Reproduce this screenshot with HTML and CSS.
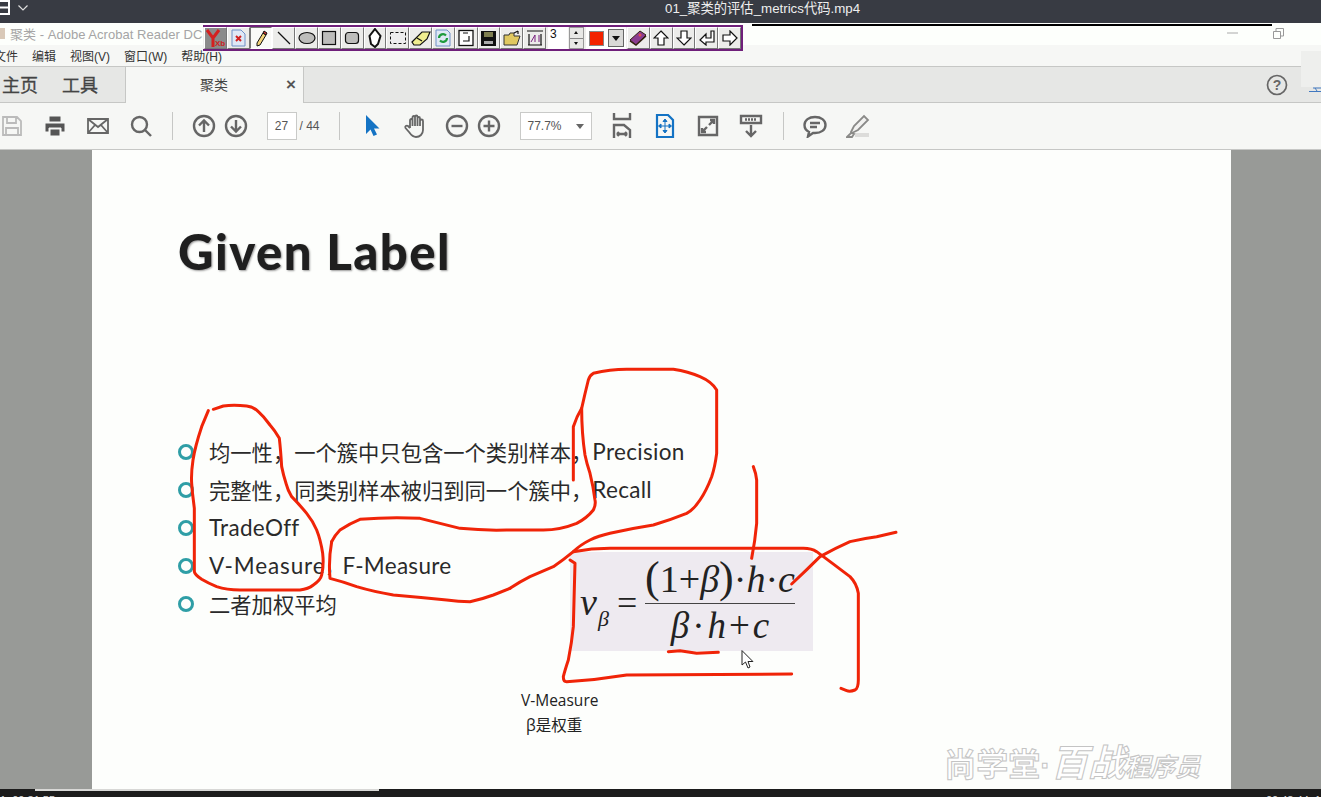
FILE: index.html
```html
<!DOCTYPE html>
<html lang="zh">
<head>
<meta charset="utf-8">
<title>聚类</title>
<link rel="stylesheet" href="styles.css">
</head>
<body>
<div class="app">
  <header class="player-bar">
    <svg class="player-logo" width="12" height="16" viewBox="0 0 12 16"><path d="M-2 1H9V14H-2M-2 7.500H9"/></svg>
    <svg class="player-chev" width="12" height="8" viewBox="0 0 12 8"><path d="M1.500 1.500L6 6L10.500 1.500"/></svg>
    <span class="player-title">01_聚类的评估_metrics代码.mp4</span>
  </header>

  <div class="titlebar">
    <span class="doc-mini"></span>
    <span class="app-title">聚类 - Adobe Acrobat Reader DC</span>
    <svg class="win-min" width="11" height="2" viewBox="0 0 11 2"><path d="M0 1H11"/></svg>
    <svg class="win-restore" width="11" height="11" viewBox="0 0 11 11"><path d="M.5 3.500H7.500V10.500H.5ZM3 3.500V.5H10.500V8H7.500"/></svg>
  </div>

  <nav class="menubar">
    <span>文件</span><span>编辑</span><span>视图(V)</span><span>窗口(W)</span><span>帮助(H)</span>
  </nav>

  <div class="tabbar">
    <span class="tab-link tab-home">主页</span>
    <span class="tab-link tab-tools">工具</span>
    <div class="tab-active"><span>聚类</span><b>×</b></div>
    <svg class="help" width="22" height="22" viewBox="0 0 22 22"><circle cx="11" cy="11" r="9.500"/><text x="11" y="16" text-anchor="middle">?</text></svg>
  </div>

  <div class="toolbar">
    <div class="tb-group g-file">
      <span class="tb"><svg width="22" height="24" viewBox="0 0 22 24" class="ic ic-off"><path d="M2 3H16L20 7V21H2ZM6 3V9H15V3M5 21V14H17V21"/></svg></span>
      <span class="tb"><svg width="24" height="24" viewBox="0 0 24 24" class="ic ic-solid"><path d="M6 2H18V8H6ZM2 9H22V18H18V14H6V18H2ZM7 15H17V22H7Z"/></svg></span>
      <span class="tb"><svg width="24" height="24" viewBox="0 0 24 24" class="ic"><path d="M2 5H22V19H2ZM2 5L12 13L22 5M2 19L9 11M22 19L15 11"/></svg></span>
      <span class="tb"><svg width="24" height="24" viewBox="0 0 24 24" class="ic ic-bold"><circle cx="10.500" cy="10.500" r="7.500"/><path d="M16 16L22 22"/></svg></span>
    </div>
    <i class="sep s1"></i>
    <div class="tb-group g-nav">
      <span class="tb tb-s"><svg width="24" height="24" viewBox="0 0 24 24" class="ic ic-bold"><circle cx="12" cy="12" r="10"/><path d="M12 18V7M7 11.500L12 6.500L17 11.500"/></svg></span>
      <span class="tb tb-s"><svg width="24" height="24" viewBox="0 0 24 24" class="ic ic-bold"><circle cx="12" cy="12" r="10"/><path d="M12 6V17M7 12.500L12 17.500L17 12.500"/></svg></span>
    </div>
    <span class="field page-field">27</span>
    <span class="page-total">/ 44</span>
    <i class="sep s2"></i>
    <div class="tb-group g-select">
      <span class="tb"><svg width="24" height="24" viewBox="0 0 24 24" class="ic-blue"><path d="M6 1V20L10.500 15.500L13.500 22L17 20.500L14 14.500H19.500Z"/></svg></span>
      <span class="tb"><svg width="24" height="24" viewBox="0 0 24 24" class="ic"><path d="M7 14V6.500C7 4.500 9.500 4.500 9.500 6.500V12M9.500 12V3.500C9.500 1.500 12 1.500 12 3.500V12M12 12V3C12 1 14.500 1 14.500 3V12M14.500 12V4.500C14.500 2.500 17 2.500 17 4.500V12M17 12V7C17 5 20 5 20 7V16C20 20 17 23 13 23C9 23 7.500 20 6 18L2.500 14C1.500 12.500 3.500 11 5 12L7 14"/></svg></span>
    </div>
    <div class="tb-group g-zoom">
      <span class="tb tb-s"><svg width="24" height="24" viewBox="0 0 24 24" class="ic ic-bold"><circle cx="12" cy="12" r="10"/><path d="M6.500 12H17.500"/></svg></span>
      <span class="tb tb-s"><svg width="24" height="24" viewBox="0 0 24 24" class="ic ic-bold"><circle cx="12" cy="12" r="10"/><path d="M6.500 12H17.500M12 6.500V17.500"/></svg></span>
    </div>
    <span class="field zoom-field">77.7%<i class="caret"></i></span>
    <div class="tb-group g-view">
      <span class="tb"><svg width="20" height="26" viewBox="0 0 20 26" class="ic ic-bold"><path d="M2 0V6H18V0M2 25V12H12L18 17V25M5 21H15M5 21L7 19M5 21L7 23M15 21L13 19M15 21L13 23"/></svg></span>
      <span class="tb"><svg width="20" height="24" viewBox="0 0 20 24" class="ic-blue-line"><path d="M2 1H13L18 6V23H2Z"/><path class="thin" d="M10 6V18M4 12H16M10 5L8 7.500H12ZM10 19L8 16.500H12ZM3.500 12L6 10V14ZM16.500 12L14 10V14Z"/></svg></span>
      <span class="tb"><svg width="22" height="22" viewBox="0 0 22 22" class="ic ic-bold"><path d="M2 2H20V20H2Z"/><path d="M12 10L17 5M13 5H17V9M10 12L5 17M5 13V17H9"/></svg></span>
      <span class="tb"><svg width="24" height="24" viewBox="0 0 24 24" class="ic ic-bold"><path d="M2 2H22V9H2ZM12 11V22M7 17L12 22L17 17"/><path class="dots" d="M6 5.500H18"/></svg></span>
    </div>
    <i class="sep s3"></i>
    <div class="tb-group g-review">
      <span class="tb"><svg width="24" height="24" viewBox="0 0 24 24" class="ic ic-bold"><path d="M12 3C18 3 22.500 6 22.500 11C22.500 16 18 19 12 19H10L5 22.500L6 18C3 16.500 1.500 14 1.500 11C1.500 6 6 3 12 3ZM7 9H17M7 13H14"/></svg></span>
      <span class="tb"><svg width="24" height="24" viewBox="0 0 24 24" class="ic-light"><path class="hl-base" d="M9 19H23V23H9Z"/><path d="M5 18L8 12L18 2L22 6L12 16L6 19Z"/><path d="M1 23L5 19L8 20L6 23Z"/></svg></span>
    </div>
  </div>

  <main class="viewer">
    <article class="page">
      <h1 class="slide-title">Given Label</h1>
      <ul class="bullets">
        <li>均一性，一个簇中只包含一个类别样本，<span class="lat">Precision</span></li>
        <li>完整性，同类别样本被归到同一个簇中，<span class="lat">Recall</span></li>
        <li><span class="lat">TradeOff</span></li>
        <li><span class="lat lat-v">V-Measure</span><span class="comma">，</span><span class="lat">F-Measure</span></li>
        <li>二者加权平均</li>
      </ul>
      <figure class="figure">
        <div class="formula">
          <span class="f-v">v<sub>β</sub></span>
          <span class="f-eq">=</span>
          <span class="f-frac">
            <span class="f-num"><span class="up-p">(</span><span class="up-t">1+</span>β<span class="up-p">)</span><span class="up-t">·</span>h<span class="up-t">·</span>c</span>
            <span class="f-den">β<span class="up-t sp">·</span>h<span class="up-t sp">+</span>c</span>
          </span>
        </div>
        <figcaption class="caption">
          <span>V-Measure</span>
          <span class="cap-2">β是权重</span>
        </figcaption>
      </figure>
      <div class="watermark">尚学堂<span class="wm-dot">·</span><em>百战</em><em class="wm-small">程序员</em></div>
    </article>
  </main>

  <footer class="player-foot">
    <i class="progress"></i>
    <span class="time">1: 00:31:55</span>
    <span class="time">00:48:44 :1</span>
  </footer>

  <!-- floating annotation palette -->
  <div class="palette">
    <span class="pb pb-logo"><svg width="20" height="20" viewBox="0 0 20 20"><path class="y" d="M2 2L8 10V19M14 2L8 10"/><text x="10" y="18">Xb</text></svg></span>
    <span class="pb"><svg width="18" height="18" viewBox="0 0 18 18"><path class="doc" d="M3 1H12L16 5V17H3Z"/><path class="docx" d="M7 7L12 12M12 7L7 12"/></svg></span>
    <span class="pb pb-on"><svg width="16" height="18" viewBox="0 0 16 18"><path class="pen" d="M4 14L10 4L13 6L7 16L4 17Z"/><path class="pen-tip" d="M10 4L11 2L14 4L13 6Z"/></svg></span>
    <span class="pb"><svg width="16" height="16" viewBox="0 0 16 16"><path class="ln" d="M2 2L14 14"/></svg></span>
    <span class="pb"><svg width="18" height="14" viewBox="0 0 18 14"><ellipse class="sh" cx="9" cy="7" rx="8" ry="5.500"/></svg></span>
    <span class="pb"><svg width="16" height="16" viewBox="0 0 16 16"><rect class="sh" x="1.500" y="1.500" width="13" height="13"/></svg></span>
    <span class="pb"><svg width="16" height="16" viewBox="0 0 16 16"><rect class="sh" x="1.500" y="2.500" width="13" height="11" rx="3"/></svg></span>
    <span class="pb"><svg width="14" height="20" viewBox="0 0 14 20"><path class="ln-w ln-thick" d="M7 1L12.500 8L10 16L7 19L3 16L1.500 8Z"/></svg></span>
    <span class="pb"><svg width="18" height="14" viewBox="0 0 18 14"><rect class="dash" x="1.500" y="1.500" width="15" height="11"/></svg></span>
    <span class="pb"><svg width="20" height="16" viewBox="0 0 20 16"><path class="eraser" d="M1 12L11 2H19L16 9L9 15H3Z"/><path class="ln" d="M6 8L11 11"/></svg></span>
    <span class="pb"><svg width="16" height="18" viewBox="0 0 16 18"><path class="doc" d="M1 1H12L15 4V17H1Z"/><path class="grn" d="M4 9A4 4 0 0 1 11 6.500M12 9A4 4 0 0 1 5 11.500"/></svg></span>
    <span class="pb"><svg width="16" height="18" viewBox="0 0 16 18"><rect class="ln-box" x="1" y="1.500" width="14" height="15"/><path class="ln" d="M5 4H10M5 12H11V7"/></svg></span>
    <span class="pb"><svg width="15" height="15" viewBox="0 0 15 15"><path class="disk" d="M0 0H15V15H0Z"/><path class="disk-l" d="M3 1H12V6H3Z"/><path class="disk-s" d="M3 10H12V13H3Z"/></svg></span>
    <span class="pb"><svg width="18" height="16" viewBox="0 0 18 16"><path class="folder" d="M1 15V5H6L7 3H11V6H17L14 15Z"/><path class="ln" d="M11 3L15 1M15 1V4"/></svg></span>
    <span class="pb"><svg width="16" height="16" viewBox="0 0 16 16"><path class="ln" d="M0 1H16M1 15H15M2 15V4M14 15V4"/><path class="pur" d="M4 12L8 5M8 5V12M12 5V12"/></svg></span>
    <span class="pf-num">3</span>
    <span class="pf-spin"><i class="up"></i><i class="down"></i></span>
    <span class="pf-color"><i class="swatch"></i><i class="drop"></i></span>
    <span class="pb"><svg width="18" height="16" viewBox="0 0 18 16"><path class="book" d="M1 10L11 1L17 5L7 15Z"/><path class="book-l" d="M1 11L7 15L17 6"/><circle class="book-d" cx="11" cy="5" r="1.500"/></svg></span>
    <span class="pb"><svg width="16" height="16" viewBox="0 0 16 16"><path class="ln-w" d="M8 1L15 8H11V15H5V8H1Z"/></svg></span>
    <span class="pb"><svg width="16" height="16" viewBox="0 0 16 16"><path class="ln-w" d="M8 15L15 8H11V1H5V8H1Z"/></svg></span>
    <span class="pb"><svg width="16" height="16" viewBox="0 0 16 16"><path class="ln-w" d="M1 10L7 4V8H12V1H15V12H7V15Z"/></svg></span>
    <span class="pb"><svg width="16" height="16" viewBox="0 0 16 16"><path class="ln-w" d="M15 8L8 1V5H1V11H8V15Z"/></svg></span>
  </div>
  <i class="black-line"></i>
  <div class="corner-patch"></div>
  <svg class="corner-frag" width="12" height="5" viewBox="0 0 12 5"><path d="M0 4.500H12M4 1H12M6 1L8 4"/></svg>

  <!-- red pen annotations drawn over the document -->
  <svg class="ink" width="1321" height="797" viewBox="0 0 1321 797">
    <g transform="translate(160 360) scale(.33333)">
      <path d="M145 152L125 200Q105 260 99 300Q93 340 95 370Q97 400 100 420L103 445L103 635Q105 645 125 658Q145 670 170 680Q200 690 240 690L420 690Q445 687 460 675Q482 660 485 645Q492 615 488 580Q482 540 470 510Q458 482 440 460Q415 430 395 410Q383 390 378 370Q370 345 365 320Q362 270 358 235Q345 212 330 195Q312 170 295 155Q280 140 260 138Q220 134 190 138L160 148"/>
      <path d="M1050 685Q1025 695 1000 705Q965 718 930 725Q895 725 860 720Q780 712 700 705Q640 695 590 680Q550 665 510 655Q505 600 515 545"/>
    </g>
    <g transform="translate(510 360) scale(.33333)">
      <path d="M-535 545Q-525 525 -510 510Q-480 490 -450 478Q-360 470 -270 475Q-210 490 -150 505Q-80 512 -10 510L100 510Q150 510 200 490Q230 475 250 450Q258 435 255 420Q250 380 240 340Q230 310 225 285Q215 220 215 145Q225 100 235 60Q240 45 250 40Q300 28 350 28L490 28Q535 35 570 50Q605 65 620 90L620 280Q615 320 605 350Q590 390 570 420Q550 450 530 460Q480 480 430 495Q365 505 300 520Q265 528 240 540Q210 555 190 575Q160 600 130 620Q95 635 60 650Q30 665 0 685"/>
      <path d="M190 360L190 200Q200 170 215 145"/>
      <path d="M180 600L195 610L190 800Q185 850 175 900Q165 930 160 950Q160 965 170 965Q260 960 350 945L845 942"/>
      <path d="M190 575Q245 565 300 565L880 565Q905 565 920 575Q970 612 1020 650Q1040 670 1045 700L1045 960Q1045 985 1035 990Q1020 996 1010 992L993 985"/>
      <path d="M730 320Q738 340 740 360L740 490Q735 545 725 595"/>
      <path d="M845 672Q890 630 930 590Q975 565 1020 545Q1060 535 1100 530L1158 517"/>
      <path d="M475 875L510 872L560 880L625 877"/>
    </g>
    <path class="cursor" d="M742 651V665L745.500 662L748 668L750 667L748 661.500H752.500Z"/>
  </svg>
</div>
</body>
</html>
```

FILE: styles.css
```css
* { box-sizing: border-box; }
html, body { margin: 0; padding: 0; }
body { width: 1321px; height: 797px; overflow: hidden; font-family: "Liberation Sans", "Noto Sans CJK SC", sans-serif; background: #989a97; }
.app { position: relative; width: 1321px; height: 797px; display: flex; flex-direction: column; overflow: hidden; }

/* video player top bar */
.player-bar { flex: 0 0 23px; background: #383b43; display: flex; align-items: flex-start; color: #eee; }
.player-logo { fill: none; stroke: #fff; stroke-width: 2; flex: none; }
.player-chev { fill: none; stroke: #ddd; stroke-width: 1.200; margin: 4px 0 0 5px; flex: none; }
.player-title { margin-left: 636px; font-size: 13.300px; line-height: 17px; white-space: nowrap; }

/* acrobat title bar */
.titlebar { flex: 0 0 22px; background: #fdfffc; display: flex; align-items: center; padding-bottom: 2px; }
.doc-mini { width: 5px; height: 11px; background: #d9c9b8; margin-right: 5px; }
.app-title { font-size: 13px; color: #a5a5a5; letter-spacing: .03px; white-space: nowrap; width: 1217px; flex: none; }
.win-min { stroke: #aaa; fill: none; flex: none; }
.win-restore { stroke: #999; fill: none; margin-left: 35px; flex: none; }

.menubar { flex: 0 0 21px; background: #f6f7f5; display: flex; gap: 14px; align-items: center; font-size: 12px; color: #333; white-space: nowrap; }
.menubar span:first-child { margin-left: -6px; }

.tabbar { flex: 0 0 37px; background: #e6e7e5; border-top: 1px solid #c6c7c5; border-bottom: 1px solid #c6c7c5; display: flex; align-items: center; }
.tab-link { font-size: 18px; color: #444; -webkit-text-stroke: .3px #444; padding-bottom: 2px; }
.tab-home { margin-left: 2px; }
.tab-tools { margin-left: 24px; }
.tab-active { margin-left: 27px; width: 179px; height: 36px; margin-bottom: -1px; background: #f6f7f5; border-left: 1px solid #c6c7c5; border-right: 1px solid #c6c7c5; display: flex; align-items: center; font-size: 14px; color: #444; padding-bottom: 2px; flex: none; }
.tab-active span { margin-left: 74px; }
.tab-active b { margin-left: 58px; font-size: 17px; color: #555; line-height: 1; }
.help { margin-left: 962px; fill: none; stroke: #666; stroke-width: 1.700; flex: none; }
.help text { font: bold 14px "Liberation Sans", sans-serif; fill: #666; stroke: none; }

/* main toolbar */
.toolbar { flex: 0 0 47px; background: #f6f7f5; border-bottom: 1px solid #c6c7c5; display: flex; align-items: center; }
.tb-group { display: flex; align-items: center; flex: none; }
.tb { width: 43px; display: flex; justify-content: center; align-items: center; flex: none; }
.tb-s { width: 32px; }
.g-file { margin-left: -9.500px; }
.sep { width: 1px; height: 28px; background: #c6c7c5; flex: none; }
.s1 { margin-left: 9px; }
.g-nav { margin-left: 15px; }
.field { background: #fff; border: 1px solid #c9cac8; height: 28px; display: flex; align-items: center; font-size: 12px; color: #555; flex: none; }
.page-field { margin-left: 15px; width: 30px; justify-content: center; }
.page-total { margin-left: 3px; width: 20px; font-size: 12px; color: #555; white-space: nowrap; flex: none; }
.s2 { margin-left: 19px; }
.g-select { margin-left: 11px; }
.g-zoom { margin-left: 4px; }
.zoom-field { margin-left: 15px; width: 72px; padding-left: 7px; position: relative; }
.caret { position: absolute; right: 7px; top: 11px; border: 4px solid transparent; border-top: 5px solid #666; border-bottom: 0; }
.g-view { margin-left: 9px; }
.s3 { margin-left: 10px; }
.g-review { margin-left: 10px; }
.ic { fill: none; stroke: #666; stroke-width: 1.800; }
.ic-off { stroke: #bbb; }
.ic-bold { stroke-width: 2.400; }
.ic-solid { fill: #555; stroke: #f6f7f5; stroke-width: 1; }
.ic-blue { fill: #1473c4; }
.ic-blue-line { fill: none; stroke: #1473c4; stroke-width: 2.200; }
.ic-blue-line .thin { stroke-width: 1; fill: #1473c4; }
.dots { stroke-dasharray: 2 1; }
.ic-light { fill: #f2f2f0; stroke: #8a8a88; stroke-width: 1.800; }
.ic-light .hl-base { fill: #dcdcda; stroke: none; }

/* viewer */
.viewer { flex: 1 1 0; background: #989a97; padding-left: 92px; min-height: 0; }
.page { position: relative; width: 1139px; height: 100%; background: #fdfefc; padding: 75px 0 0 86px; }
.slide-title { margin: 0; font-family: "Lato", sans-serif; font-weight: 900; font-size: 49px; line-height: 52px; letter-spacing: 1.500px; color: #1f1f1f; text-shadow: 1px 1px 2px #999; white-space: nowrap; }
.bullets { list-style: none; margin: 155px 0 0; padding: 0; }
.bullets li { height: 38px; display: flex; align-items: center; font-family: "Noto Sans CJK SC", "Lato", sans-serif; font-size: 21.300px; color: #2a2a2a; white-space: nowrap; }
.bullets li::before { content: ""; flex: none; box-sizing: border-box; width: 16px; height: 16px; border: 3.500px solid #2f9ea6; border-radius: 50%; margin: 2px 15px 0 0; }
.lat { font-family: "Lato", sans-serif; font-size: 22.500px; letter-spacing: .3px; }
.lat-v { letter-spacing: .9px; }
.comma { font-size: 17px; }

.figure { position: absolute; left: 429px; top: 402px; margin: 0; }
.formula { margin-left: 49px; width: 243px; height: 99px; background: #eeeaf0; display: flex; align-items: center; font-family: "Liberation Serif", serif; font-style: italic; color: #222; }
.f-v { font-size: 38px; margin-left: 10px; width: 37px; white-space: nowrap; line-height: 1; }
.f-v sub { font-size: 22px; vertical-align: -11px; line-height: 0; margin-left: 1px; }
.f-eq { font-size: 36px; font-style: normal; width: 28px; line-height: 1; margin-top: 2px; }
.f-frac { display: flex; flex-direction: column; align-items: center; width: 150px; align-self: flex-start; margin-top: 6px; }
.f-num { font-size: 38px; line-height: 42px; height: 46px; border-bottom: 1.500px solid #444; width: 150px; text-align: center; white-space: nowrap; }
.f-den { font-size: 37px; line-height: 44px; white-space: nowrap; }
.up-p { font-style: normal; font-size: 44px; line-height: 0; font-weight: 400; }
.up-t { font-style: normal; }
.sp { margin: 0 3px; }
.caption { margin-top: 37px; font-size: 15.500px; line-height: 25px; color: #222; display: flex; flex-direction: column; font-family: "Open Sans", "Noto Sans CJK SC", sans-serif; white-space: nowrap; }
.cap-2 { margin-left: 5px; }

.watermark { position: absolute; right: 31px; bottom: 6px; font-family: "Noto Sans CJK SC", sans-serif; font-weight: 700; font-size: 32px; line-height: 36px; color: #fff; -webkit-text-stroke: 1px #c4c4c4; white-space: nowrap; display: flex; align-items: baseline; }
.wm-dot { font-family: "Liberation Sans", sans-serif; }
.watermark em { font-style: italic; font-size: 37px; }
.watermark .wm-small { font-size: 25px; }

.player-foot { flex: 0 0 8px; background: #1c1c1c; position: relative; display: flex; justify-content: space-between; overflow: hidden; padding-top: 5px; }
.progress { position: absolute; left: 35px; top: 0; width: 344px; height: 2px; background: #d8d8d6; }
.time { color: #ddd; font-size: 11px; line-height: 13px; white-space: nowrap; }

/* floating palette */
.palette { position: absolute; left: 203px; top: 25px; width: 540px; height: 26px; display: flex; padding: 0 4px 0 1px; background: #efefed; border-top: 2px solid #6f1f7a; border-bottom: 2px solid #6f1f7a; border-right: 4px solid #6f1f7a; }
.pb { flex: 0 0 22.800px; height: 22px; display: flex; align-items: center; justify-content: center; background: #ececea; border: 1px solid; border-color: #fff #777 #777 #fff; }
.pb svg { fill: none; }
.pb-on { background: #fafaf8; border-color: #777 #fff #fff #777; }
.pb-logo { background: #8b8b8b; }
.pb-logo .y { stroke: #d42020; stroke-width: 3; }
.pb-logo text { font: bold 8px "Liberation Sans", sans-serif; fill: #c22; }
.doc { fill: #dfe8f6; stroke: #6f90c8; }
.docx { stroke: #d02020; stroke-width: 2; }
.pen { fill: #f2d27a; stroke: #111; }
.pen-tip { fill: #c33; stroke: #111; }
.ln { stroke: #111; stroke-width: 1.200; fill: none; }
.ln-w { stroke: #111; stroke-width: 1.200; fill: #fff; }
.ln-thick { stroke-width: 2; }
.ln-box { stroke: #111; stroke-width: 1.300; fill: #fff; }
.sh { stroke: #111; stroke-width: 1.200; fill: #bdbdbb; }
.dash { stroke: #111; stroke-width: 1; stroke-dasharray: 3 2; fill: #eee; }
.eraser { fill: #f0ee90; stroke: #111; stroke-width: 1.200; }
.grn { fill: none; stroke: #1d9a3c; stroke-width: 2.200; }
.disk { fill: #111; }
.disk-l { fill: #7f7f50; }
.disk-s { fill: #aaa; }
.folder { fill: #e0c860; stroke: #333; }
.pur { stroke: #7a2080; fill: none; }
.book { fill: #8a3c90; stroke: #321; }
.book-l { stroke: #321; fill: none; stroke-width: 1.500; }
.book-d { fill: #e05050; }
.pf-num { flex: 0 0 20px; margin-left: 2px; height: 22px; background: #fff; font-size: 12px; line-height: 15px; padding-left: 2px; color: #111; }
.pf-spin { flex: 0 0 15px; margin-left: 1px; height: 22px; display: flex; flex-direction: column; background: #e8e8e6; border: 1px solid #999; }
.pf-spin i { flex: 1; position: relative; }
.up::after, .down::after { content: ""; position: absolute; left: 4px; top: 3px; border: 2px solid transparent; }
.up::after { border-bottom: 3px solid #111; border-top: 0; }
.down { border-top: 1px solid #888; }
.down::after { border-top: 3px solid #111; border-bottom: 0; }
.pf-color { flex: 0 0 40px; margin: 0 1px 0 2px; height: 22px; display: flex; align-items: center; gap: 4px; background: #fff; padding-left: 3px; }
.swatch { width: 15px; height: 15px; background: #f32200; border: 1px solid #888; }
.drop { width: 16px; height: 18px; background: #d9d9d7; border: 1px solid #666; position: relative; }
.drop::after { content: ""; position: absolute; left: 3px; top: 6px; border: 4px solid transparent; border-top: 5px solid #111; border-bottom: 0; }

.black-line { position: absolute; left: 752px; top: 24px; width: 520px; height: 2px; background: #000; }
.corner-patch { position: absolute; right: 0; top: 51px; width: 20px; height: 36px; background: #eeefed; }
.corner-frag { position: absolute; right: 0; top: 87px; fill: none; stroke: #4078c0; }

/* red pen overlay */
.ink { position: absolute; left: 0; top: 0; pointer-events: none; }
.ink path { fill: none; stroke: #f02408; stroke-width: 9; stroke-linejoin: round; stroke-linecap: round; }
.ink path.cursor { fill: #fff; stroke: #222; stroke-width: 1; }
```
